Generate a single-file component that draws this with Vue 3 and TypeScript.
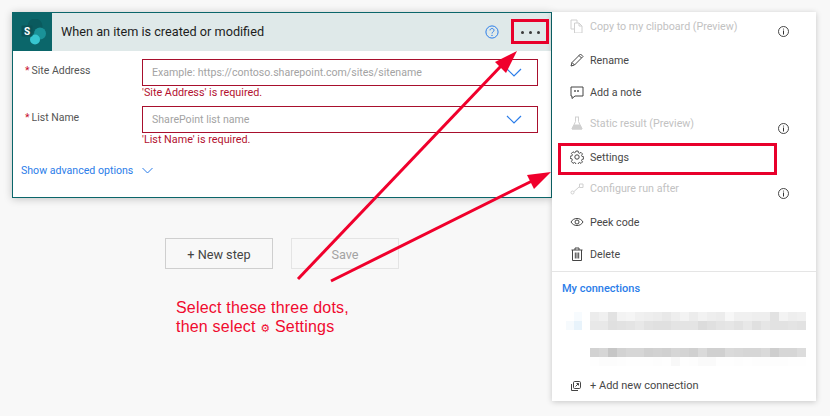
<script setup lang="ts">
interface Action {
  label: string
  icon: string
  gap: number
  disabled?: boolean
  info?: boolean
}

const actions: Action[] = [
  { label: 'Copy to my clipboard (Preview)', icon: 'copy', gap: 4, disabled: true, info: true },
  { label: 'Rename', icon: 'pencil', gap: 14 },
  { label: 'Add a note', icon: 'note', gap: 12 },
  { label: 'Static result (Preview)', icon: 'flask', gap: 11, disabled: true, info: true },
  { label: 'Settings', icon: 'gear', gap: 14 },
  { label: 'Configure run after', icon: 'flow', gap: 11, disabled: true, info: true },
  { label: 'Peek code', icon: 'eye', gap: 14 },
  { label: 'Delete', icon: 'trash', gap: 12 }
]

const fields = [
  { label: 'Site Address', placeholder: 'Example: https://contoso.sharepoint.com/sites/sitename', error: "'Site Address' is required." },
  { label: 'List Name', placeholder: 'SharePoint list name', error: "'List Name' is required." }
]

const shade = (v: number) => `rgb(${v},${v},${v})`
const blurRows: number[][] = [
  [236, 240, 226, 243, 245, 240, 238, 236, 232, 238, 243, 236, 242, 238, 236, 247, 240, 240, 238, 238, 226, 243, 238, 240],
  [232, 232, 224, 226, 228, 232, 226, 224, 224, 228, 228, 228, 220, 224, 228, 230, 226, 232, 224, 230, 226, 226, 228, 226],
  [210, 214, 198, 210, 214, 214, 208, 210, 208, 214, 212, 208, 218, 208, 208, 218, 216, 214, 214, 218, 206, 214, 214, 220],
  [254, 252, 252, 253, 254, 254, 254, 253, 254, 248, 254, 253, 250, 250, 254, 254, 253, 254, 253, 253, 253, 253, 254, 254]
]
</script>

<template>
  <div class="page">
    <section class="card">
      <header class="card-head">
        <div class="logo">
          <svg width="27" height="27" viewBox="0 0 27 27">
            <circle cx="16" cy="7" r="7.500" fill="#0a5a5e" />
            <circle cx="21" cy="14.500" r="6" fill="#1a9298" />
            <circle cx="16" cy="20.500" r="5" fill="#37c6d0" />
            <rect x="2.500" y="6.500" width="11" height="11" rx="1" fill="#0a5357" />
            <text x="8" y="15.800" class="logo-s" text-anchor="middle">S</text>
          </svg>
        </div>
        <h1 class="card-title">When an item is created or modified</h1>
        <svg class="help" width="14" height="14" viewBox="0 0 14 14">
          <circle cx="7" cy="7" r="6.100" fill="none" stroke="#2b7de9" stroke-width="1" />
          <path d="M5 5.400C5 4.200 6 3.500 7 3.500s2 .7 2 1.800c0 1.500-2 1.600-2 3.200" fill="none" stroke="#2b7de9" stroke-width="1" />
          <circle cx="7" cy="10.400" r=".7" fill="#2b7de9" />
        </svg>
        <div class="dots"><i></i><i></i><i></i></div>
      </header>
      <div class="card-body">
        <div v-for="f in fields" :key="f.label" class="field">
          <label class="field-label"><span class="star">*</span>{{ f.label }}</label>
          <div class="field-main">
            <div class="input">
              <span class="placeholder">{{ f.placeholder }}</span>
              <svg width="16" height="9" viewBox="0 0 16 9"><path d="M1 1l7 7 7-7" fill="none" stroke="#2b7de9" stroke-width="1.200" /></svg>
            </div>
            <div class="error">{{ f.error }}</div>
          </div>
        </div>
        <div class="advanced">
          <span>Show advanced options</span>
          <svg width="11" height="7" viewBox="0 0 11 7"><path d="M.5 1l5 5 5-5" fill="none" stroke="#2b7de9" stroke-width="1" /></svg>
        </div>
      </div>
    </section>

    <div class="steps">
      <button class="btn">+ New step</button>
      <button class="btn save">Save</button>
    </div>

    <aside class="menu">
      <div
        v-for="a in actions"
        :key="a.label"
        class="action"
        :class="{ disabled: a.disabled }"
        :style="{ marginTop: a.gap + 'px' }"
      >
        <svg class="action-icon" width="14" height="14" viewBox="0 0 14 14" fill="none" stroke="currentColor" stroke-width="1">
          <template v-if="a.icon === 'copy'">
            <path d="M1 1h6v9H1z" /><path d="M4.500 4H9l3 3v7H4.500z" fill="#fff" /><path d="M9 4v3h3" />
          </template>
          <template v-else-if="a.icon === 'pencil'">
            <path d="M1 13l1-3.500L10.500 1 13 3.500 4.500 12z" /><path d="M2 9.500L4.500 12M9 2.500L11.500 5" />
          </template>
          <template v-else-if="a.icon === 'note'">
            <path d="M1 2h12v9H5l-3 2.500V11H1z" /><path d="M5 5v2M8 5v2" stroke-width="1.300" />
          </template>
          <template v-else-if="a.icon === 'flask'">
            <path d="M5 1h4M5.500 1v4.500L2 13h10L8.500 5.500V1" /><path d="M4 9h6l2 4H2z" fill="currentColor" />
          </template>
          <template v-else-if="a.icon === 'gear'">
            <path d="M5.800.8h2.400l.3 1.800 1.300.6 1.500-1 1.600 1.700-1 1.500.5 1.300 1.800.3v2.400l-1.800.3-.5 1.300 1 1.500-1.600 1.600-1.500-1-1.300.6-.3 1.700H5.800l-.3-1.700-1.300-.6-1.500 1L1 11.900l1-1.500-.5-1.300-1.800-.3V6.400l1.800-.3.5-1.300-1-1.500 1.700-1.700 1.500 1 1.300-.6z" transform="translate(.5 .3) scale(.93)" />
            <circle cx="7" cy="7" r="2.200" />
          </template>
          <template v-else-if="a.icon === 'flow'">
            <circle cx="2.500" cy="11.500" r="1.500" /><path d="M4 10.500L9 6" /><path d="M9.500 3h3.500v3.500H9.500z" />
          </template>
          <template v-else-if="a.icon === 'eye'">
            <path d="M1 7c1.500-2.500 3.500-3.500 6-3.500S11.500 4.500 13 7c-1.500 2.500-3.500 3.500-6 3.500S2.500 9.500 1 7z" /><circle cx="7" cy="7" r="2" />
          </template>
          <template v-else>
            <path d="M1.500 3h11M5 3V1h4v2M2.500 3v10.500h9V3" /><path d="M5.300 5.500v6M7 5.500v6M8.700 5.500v6" />
          </template>
        </svg>
        <span class="action-label">{{ a.label }}</span>
        <svg v-if="a.info" class="info" width="11" height="11" viewBox="0 0 11 11">
          <circle cx="5.500" cy="5.500" r="5" fill="none" stroke="#333" stroke-width=".9" />
          <path d="M5.500 4.500v4" stroke="#333" stroke-width="1" />
          <circle cx="5.500" cy="3" r=".6" fill="#333" />
        </svg>
      </div>
      <hr class="rule" />
      <div class="conn-title">My connections</div>
      <div class="conn">
        <div class="conn-mark">
          <i class="m1"></i><i class="m2"></i><i class="m3"></i><i class="m4"></i>
        </div>
        <div class="blur">
          <div v-for="(row, r) in blurRows.slice(0, 2)" :key="r" class="blur-row">
            <i v-for="(v, c) in row" :key="c" :style="{ background: shade(v) }"></i>
          </div>
        </div>
      </div>
      <div class="conn second">
        <div class="conn-mark"></div>
        <div class="blur">
          <div v-for="(row, r) in blurRows.slice(2)" :key="r" class="blur-row">
            <i v-for="(v, c) in row" :key="c" :style="{ background: shade(v) }"></i>
          </div>
        </div>
      </div>
      <div class="add">
        <svg width="10" height="10" viewBox="0 0 10 10" fill="none" stroke="#444" stroke-width="1">
          <rect x="2.500" y=".5" width="7" height="7" rx="1.200" />
          <path d="M.5 3v6.500H7" /><path d="M4.500 5.500L7.500 2.500M5.500 2.500h2v2" />
        </svg>
        <span>+ Add new connection</span>
      </div>
    </aside>

    <!-- Annotation layer drawn over the screenshot -->
    <div class="mark-dots"></div>
    <div class="mark-settings"></div>
    <svg class="arrows" width="830" height="416" viewBox="0 0 830 416">
      <path d="M298 279L501 66" stroke="#f0002c" stroke-width="3" />
      <path d="M517 51L495 62L506 73Z" fill="#f0002c" />
      <path d="M331 281L532 181" stroke="#f0002c" stroke-width="3" />
      <path d="M551 172L527 175L534 189Z" fill="#f0002c" />
    </svg>
    <p class="note">Select these three dots,<br />then select <span class="note-gear">⚙</span> Settings</p>
  </div>
</template>

<style scoped>
.page {
  position: relative;
  width: 830px;
  height: 416px;
  overflow: hidden;
  background: #f8f8f8;
  font-family: Roboto, "Noto Sans", sans-serif;
  color: #444;
}
.card {
  position: absolute;
  left: 12px;
  top: 12px;
  width: 540px;
  height: 186px;
  box-sizing: border-box;
  border: 1px solid #0b666a;
  background: #fff;
  box-shadow: 0 1px 8px rgba(0, 0, 0, 0.22);
}
.card-head {
  display: flex;
  align-items: center;
  height: 38px;
  background: #dfe9e9;
}
.logo {
  display: flex;
  align-items: center;
  justify-content: center;
  width: 39px;
  height: 38px;
  background: #0b666a;
}
.logo-s {
  font: 700 10px Roboto, sans-serif;
  fill: #fff;
}
.card-title {
  margin: -1px 0 0 9px;
  flex: 1;
  font-size: 12.700px;
  font-weight: 400;
  color: #1d1d1d;
}
.help {
  margin-right: 22px;
}
.dots {
  display: flex;
  gap: 5px;
  margin-right: 11px;
}
.dots i {
  width: 3px;
  height: 3px;
  border-radius: 50%;
  background: #3a3a3a;
}
.card-body {
  padding: 8px 13px 0 8px;
}
.field {
  display: flex;
}
.field + .field {
  margin-top: 7px;
}
.field-label {
  width: 121px;
  font-size: 10.500px;
  line-height: 24px;
  color: #555;
}
.star {
  margin: 0 2px 0 4px;
  color: #c8102e;
}
.field-main {
  flex: 1;
}
.input {
  display: flex;
  align-items: center;
  justify-content: space-between;
  height: 27px;
  box-sizing: border-box;
  padding: 0 15px 0 9px;
  border: 1px solid #a80f2d;
}
.placeholder {
  font-size: 10.600px;
  color: #a3a3a3;
}
.error {
  font-size: 10.800px;
  line-height: 13px;
  color: #b3112f;
}
.advanced {
  display: flex;
  align-items: center;
  gap: 9px;
  margin-top: 18px;
  font-size: 10.600px;
  color: #2b7de9;
}
.steps {
  position: absolute;
  left: 165px;
  top: 238px;
  display: flex;
  gap: 18px;
}
.btn {
  width: 108px;
  height: 31px;
  padding: 1px 0 0;
  border: 1px solid #cfcfcf;
  background: transparent;
  font: 12.700px Roboto, sans-serif;
  color: #444;
}
.save {
  border-color: #e4e4e4;
  color: #a3a3a3;
}
.menu {
  position: absolute;
  left: 552px;
  top: 12px;
  width: 264px;
  height: 389px;
  background: #fff;
  box-shadow: 0 1px 6px rgba(0, 0, 0, 0.2);
}
.action {
  display: flex;
  align-items: center;
  height: 20px;
  padding-left: 18px;
  font-size: 10.700px;
  color: #484848;
}
.action.disabled {
  color: #c2c2c2;
}
.action-icon {
  flex: none;
  color: #444;
}
.disabled .action-icon {
  color: #d0d0d0;
}
.action-label {
  margin-left: 6px;
}
.info {
  margin: 10px 27px 0 auto;
}
.rule {
  margin: 7px 0 0;
  border: 0;
  border-top: 1px solid #e5e5e5;
}
.conn-title {
  margin: 9px 0 0 10px;
  font-size: 11px;
  line-height: 16px;
  font-weight: 500;
  color: #2b7de9;
}
.conn {
  display: flex;
  margin-top: 15px;
  padding-left: 14px;
}
.conn.second {
  margin-top: 18px;
}
.conn-mark {
  position: relative;
  width: 24px;
  height: 18px;
}
.conn-mark i {
  position: absolute;
  width: 8px;
  height: 9px;
}
.m1 { left: 8px; top: 0; background: #f7fbfe; }
.m2 { left: 0; top: 9px; background: #f6fafd; }
.m3 { left: 8px; top: 9px; background: #e8f3fb; }
.m4 { left: 0; top: 0; background: #fff; }
.blur {
  width: 216px;
}
.blur-row {
  display: flex;
  height: 9px;
}
.blur-row i {
  width: 9px;
}
.add {
  display: flex;
  align-items: center;
  gap: 9px;
  margin-top: 13px;
  padding-left: 19px;
  font-size: 11px;
  color: #484848;
}
.mark-dots,
.mark-settings {
  position: absolute;
  box-sizing: border-box;
  border: 3px solid #e8002b;
}
.mark-dots {
  left: 511px;
  top: 19px;
  width: 38px;
  height: 25px;
}
.mark-settings {
  left: 558px;
  top: 143px;
  width: 219px;
  height: 32px;
}
.arrows {
  position: absolute;
  inset: 0;
  pointer-events: none;
}
.note {
  position: absolute;
  left: 176px;
  top: 298px;
  margin: 0;
  font: 16px/19px "Liberation Sans", sans-serif;
  letter-spacing: 0.2px;
  color: #f00a2f;
}
.note-gear {
  font-family: "DejaVu Sans", sans-serif;
  font-size: 11px;
  font-weight: 700;
}
</style>
